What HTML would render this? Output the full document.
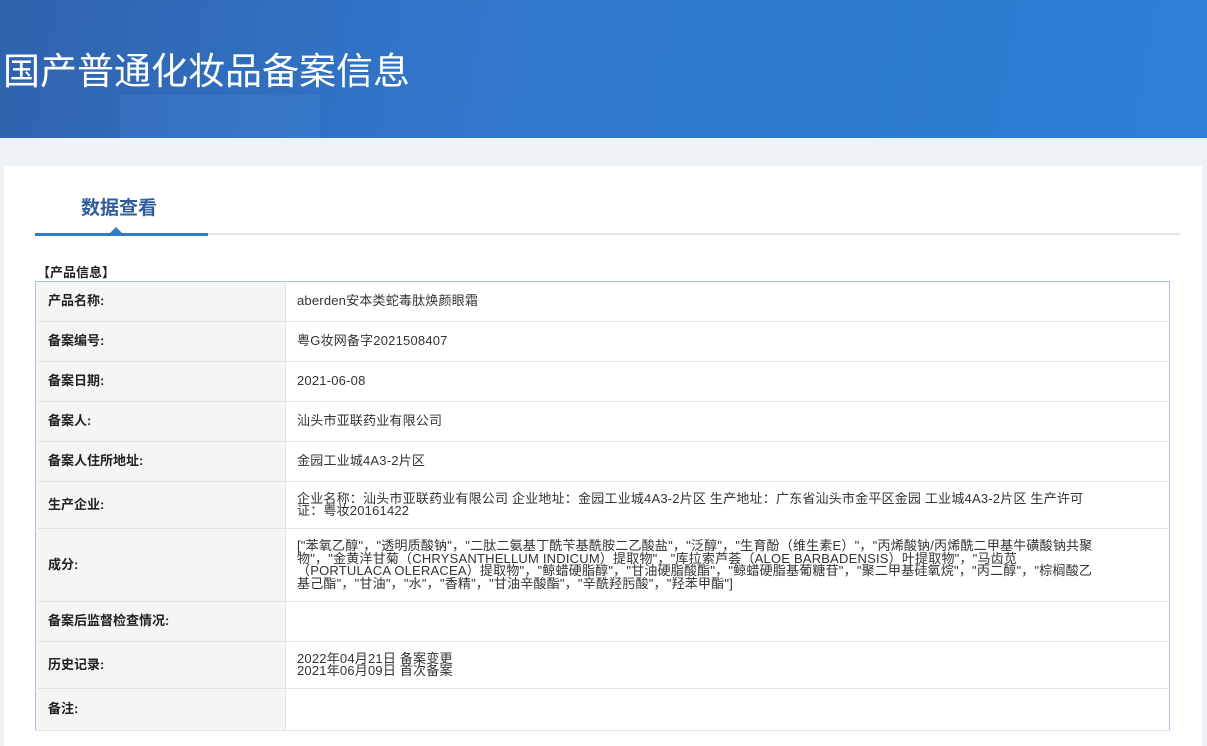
<!DOCTYPE html>
<html><head><meta charset="utf-8"><style>
*{margin:0;padding:0;box-sizing:border-box}
body{width:1207px;height:740px;overflow:hidden;background:#eef3f7;font-family:"Liberation Sans","Noto Sans CJK SC",sans-serif;}
.banner{position:absolute;left:0;top:0;width:1207px;height:138px;background:linear-gradient(100deg,#2f63ad 0%,#3277cc 40%,#2b7ad0 70%,#2e80d6 100%);overflow:hidden}
.banner .s{position:absolute;left:120px;top:95px;width:200px;height:43px;background:rgba(80,150,230,.2)}
.banner h1{position:absolute;left:3px;top:41px;color:#fff;font-size:37px;font-weight:400;font-family:"Noto Sans CJK SC",sans-serif}
.card{position:absolute;left:4px;top:166px;width:1198px;height:580px;background:#fff}
.tab{position:absolute;left:81px;top:193px;font-size:19px;font-weight:bold;color:#2f5d9c;font-family:"Noto Sans CJK SC",sans-serif}
.line{position:absolute;left:35px;top:233px;width:1145px;height:2px;background:#e4e7ea}
.line2{position:absolute;left:35px;top:233px;width:173px;height:3px;background:#2f7cc7}
.tri{position:absolute;left:110px;top:227px;width:0;height:0;border-left:6px solid transparent;border-right:6px solid transparent;border-bottom:6px solid #2f7cc7}
.sec{position:absolute;left:37px;top:262px;font-size:13px;font-weight:bold;color:#222}
table{position:absolute;left:35px;top:281px;width:1135px;border-collapse:collapse;border:1px solid #a9c0dc;font-size:13px;color:#333}
td{border-bottom:1px solid #e3e3e3;vertical-align:middle;line-height:12.5px}
td.l{width:250px;background:#f5f5f5;font-weight:bold;padding-left:12px;color:#222;border-right:1px solid #e3e3e3}
td.v{padding:0 20px 0 11px;white-space:nowrap;letter-spacing:0.2px}
</style></head><body>
<div class="banner"><div class="s"></div><h1>国产普通化妆品备案信息</h1></div>
<div class="card"></div>
<div class="tab">数据查看</div>
<div class="line"></div><div class="line2"></div><div class="tri"></div>
<div class="sec">【产品信息】</div>
<table>
<tr style="height:40px"><td class="l">产品名称:</td><td class="v">aberden安本类蛇毒肽焕颜眼霜</td></tr>
<tr style="height:40px"><td class="l">备案编号:</td><td class="v">粤G妆网备字2021508407</td></tr>
<tr style="height:40px"><td class="l">备案日期:</td><td class="v">2021-06-08</td></tr>
<tr style="height:40px"><td class="l">备案人:</td><td class="v">汕头市亚联药业有限公司</td></tr>
<tr style="height:40px"><td class="l">备案人住所地址:</td><td class="v">金园工业城4A3-2片区</td></tr>
<tr style="height:47px"><td class="l">生产企业:</td><td class="v">企业名称：汕头市亚联药业有限公司 企业地址：金园工业城4A3-2片区 生产地址：广东省汕头市金平区金园 工业城4A3-2片区 生产许可<br>证：粤妆20161422</td></tr>
<tr style="height:73px"><td class="l">成分:</td><td class="v">["苯氧乙醇"，"透明质酸钠"，"二肽二氨基丁酰苄基酰胺二乙酸盐"，"泛醇"，"生育酚（维生素E）"，"丙烯酸钠/丙烯酰二甲基牛磺酸钠共聚<br>物"，"金黄洋甘菊（CHRYSANTHELLUM INDICUM）提取物"，"库拉索芦荟（ALOE BARBADENSIS）叶提取物"，"马齿苋<br>（PORTULACA OLERACEA）提取物"，"鲸蜡硬脂醇"，"甘油硬脂酸酯"，"鲸蜡硬脂基葡糖苷"，"聚二甲基硅氧烷"，"丙二醇"，"棕榈酸乙<br>基己酯"，"甘油"，"水"，"香精"，"甘油辛酸酯"，"辛酰羟肟酸"，"羟苯甲酯"]</td></tr>
<tr style="height:40px"><td class="l">备案后监督检查情况:</td><td class="v"></td></tr>
<tr style="height:47px"><td class="l">历史记录:</td><td class="v">2022年04月21日 备案变更<br>2021年06月09日 首次备案</td></tr>
<tr style="height:42px"><td class="l">备注:</td><td class="v"></td></tr>
</table>
</body></html>
